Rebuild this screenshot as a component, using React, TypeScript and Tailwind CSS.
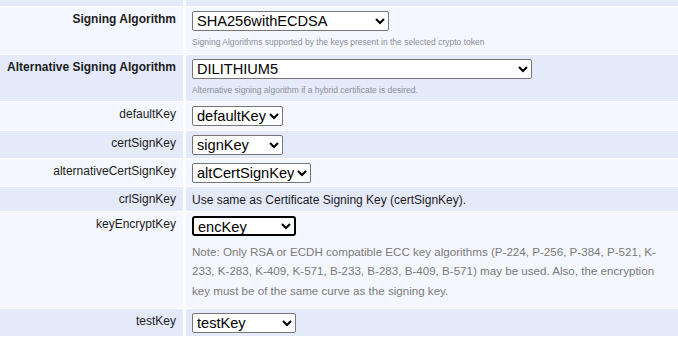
import React from "react";

const FONT = { fontFamily: '"Liberation Sans", Arial, sans-serif' };

function Sel({ value, w, focused = false }: { value: string; w: number; focused?: boolean }) {
  return (
    <select
      defaultValue={value}
      style={{ width: w }}
      className={
        focused
          ? "block h-[20px] text-[14.6px] leading-none text-black bg-white border-2 border-black rounded-[3px] pl-0 outline-none"
          : "block h-[20px] text-[14.6px] leading-none text-black bg-white border border-[#767676] rounded-[2px] pl-0 outline-none"
      }
    >
      <option value={value}>{value}</option>
    </select>
  );
}

function Row({
  label,
  bold = false,
  blue,
  children,
  h,
}: {
  label: string;
  bold?: boolean;
  blue: boolean;
  children: React.ReactNode;
  h: number;
}) {
  const bg = blue ? "bg-[#e5eafb]" : "bg-[#f5f7fe]";
  return (
    <div className="grid grid-cols-[183px_1fr] gap-x-[3px] shrink-0" style={{ height: h }}>
      <div
        className={`${bg} text-right pr-[7px] pt-[5px] text-[12px] leading-[14px] text-[#1c1c1c] ${
          bold ? "font-bold" : ""
        }`}
      >
        {label}
      </div>
      <div className={`${bg} pl-[6px] pt-[4px]`}>{children}</div>
    </div>
  );
}

export default function App() {
  return (
    <div className="w-[678px] h-[338px] bg-white overflow-hidden flex flex-col gap-y-px" style={FONT}>
      <div className="grid grid-cols-[183px_1fr] gap-x-[3px] h-[6px] shrink-0">
        <div className="bg-[#e5eafb]" />
        <div className="bg-[#e5eafb]" />
      </div>
      <Row label="Signing Algorithm" bold blue={false} h={47}>
        <Sel value="SHA256withECDSA" w={197} />
        <div className="text-[8.5px] leading-[10px] text-[#8a8f99] mt-[6px]">
          Signing Algorithms supported by the keys present in the selected crypto token
        </div>
      </Row>
      <Row label="Alternative Signing Algorithm" bold blue h={46}>
        <Sel value="DILITHIUM5" w={340} />
        <div className="text-[8.5px] leading-[10px] text-[#8a8f99] mt-[6px]">
          Alternative signing algorithm if a hybrid certificate is desired.
        </div>
      </Row>
      <Row label="defaultKey" blue={false} h={28}>
        <Sel value="defaultKey" w={91} />
      </Row>
      <Row label="certSignKey" blue h={27}>
        <Sel value="signKey" w={91} />
      </Row>
      <Row label="alternativeCertSignKey" blue={false} h={27}>
        <Sel value="altCertSignKey" w={119} />
      </Row>
      <Row label="crlSignKey" blue h={24}>
        <div className="text-[12px] leading-[14px] text-[#1c1c1c] pt-[2px]">
          Use same as Certificate Signing Key (certSignKey).
        </div>
      </Row>
      <Row label="keyEncryptKey" blue={false} h={96}>
        <Sel value="encKey" w={104} focused />
        <div className="text-[11.6px] leading-[19.4px] text-[#7a7a7a] mt-[6px] pr-[6px]">
          Note: Only RSA or ECDH compatible ECC key algorithms (P-224, P-256, P-384, P-521, K-233, K-283,
          K-409, K-571, B-233, B-283, B-409, B-571) may be used. Also, the encryption key must be of the same
          curve as the signing key.
        </div>
      </Row>
      <Row label="testKey" blue h={27}>
        <Sel value="testKey" w={104} />
      </Row>
    </div>
  );
}
